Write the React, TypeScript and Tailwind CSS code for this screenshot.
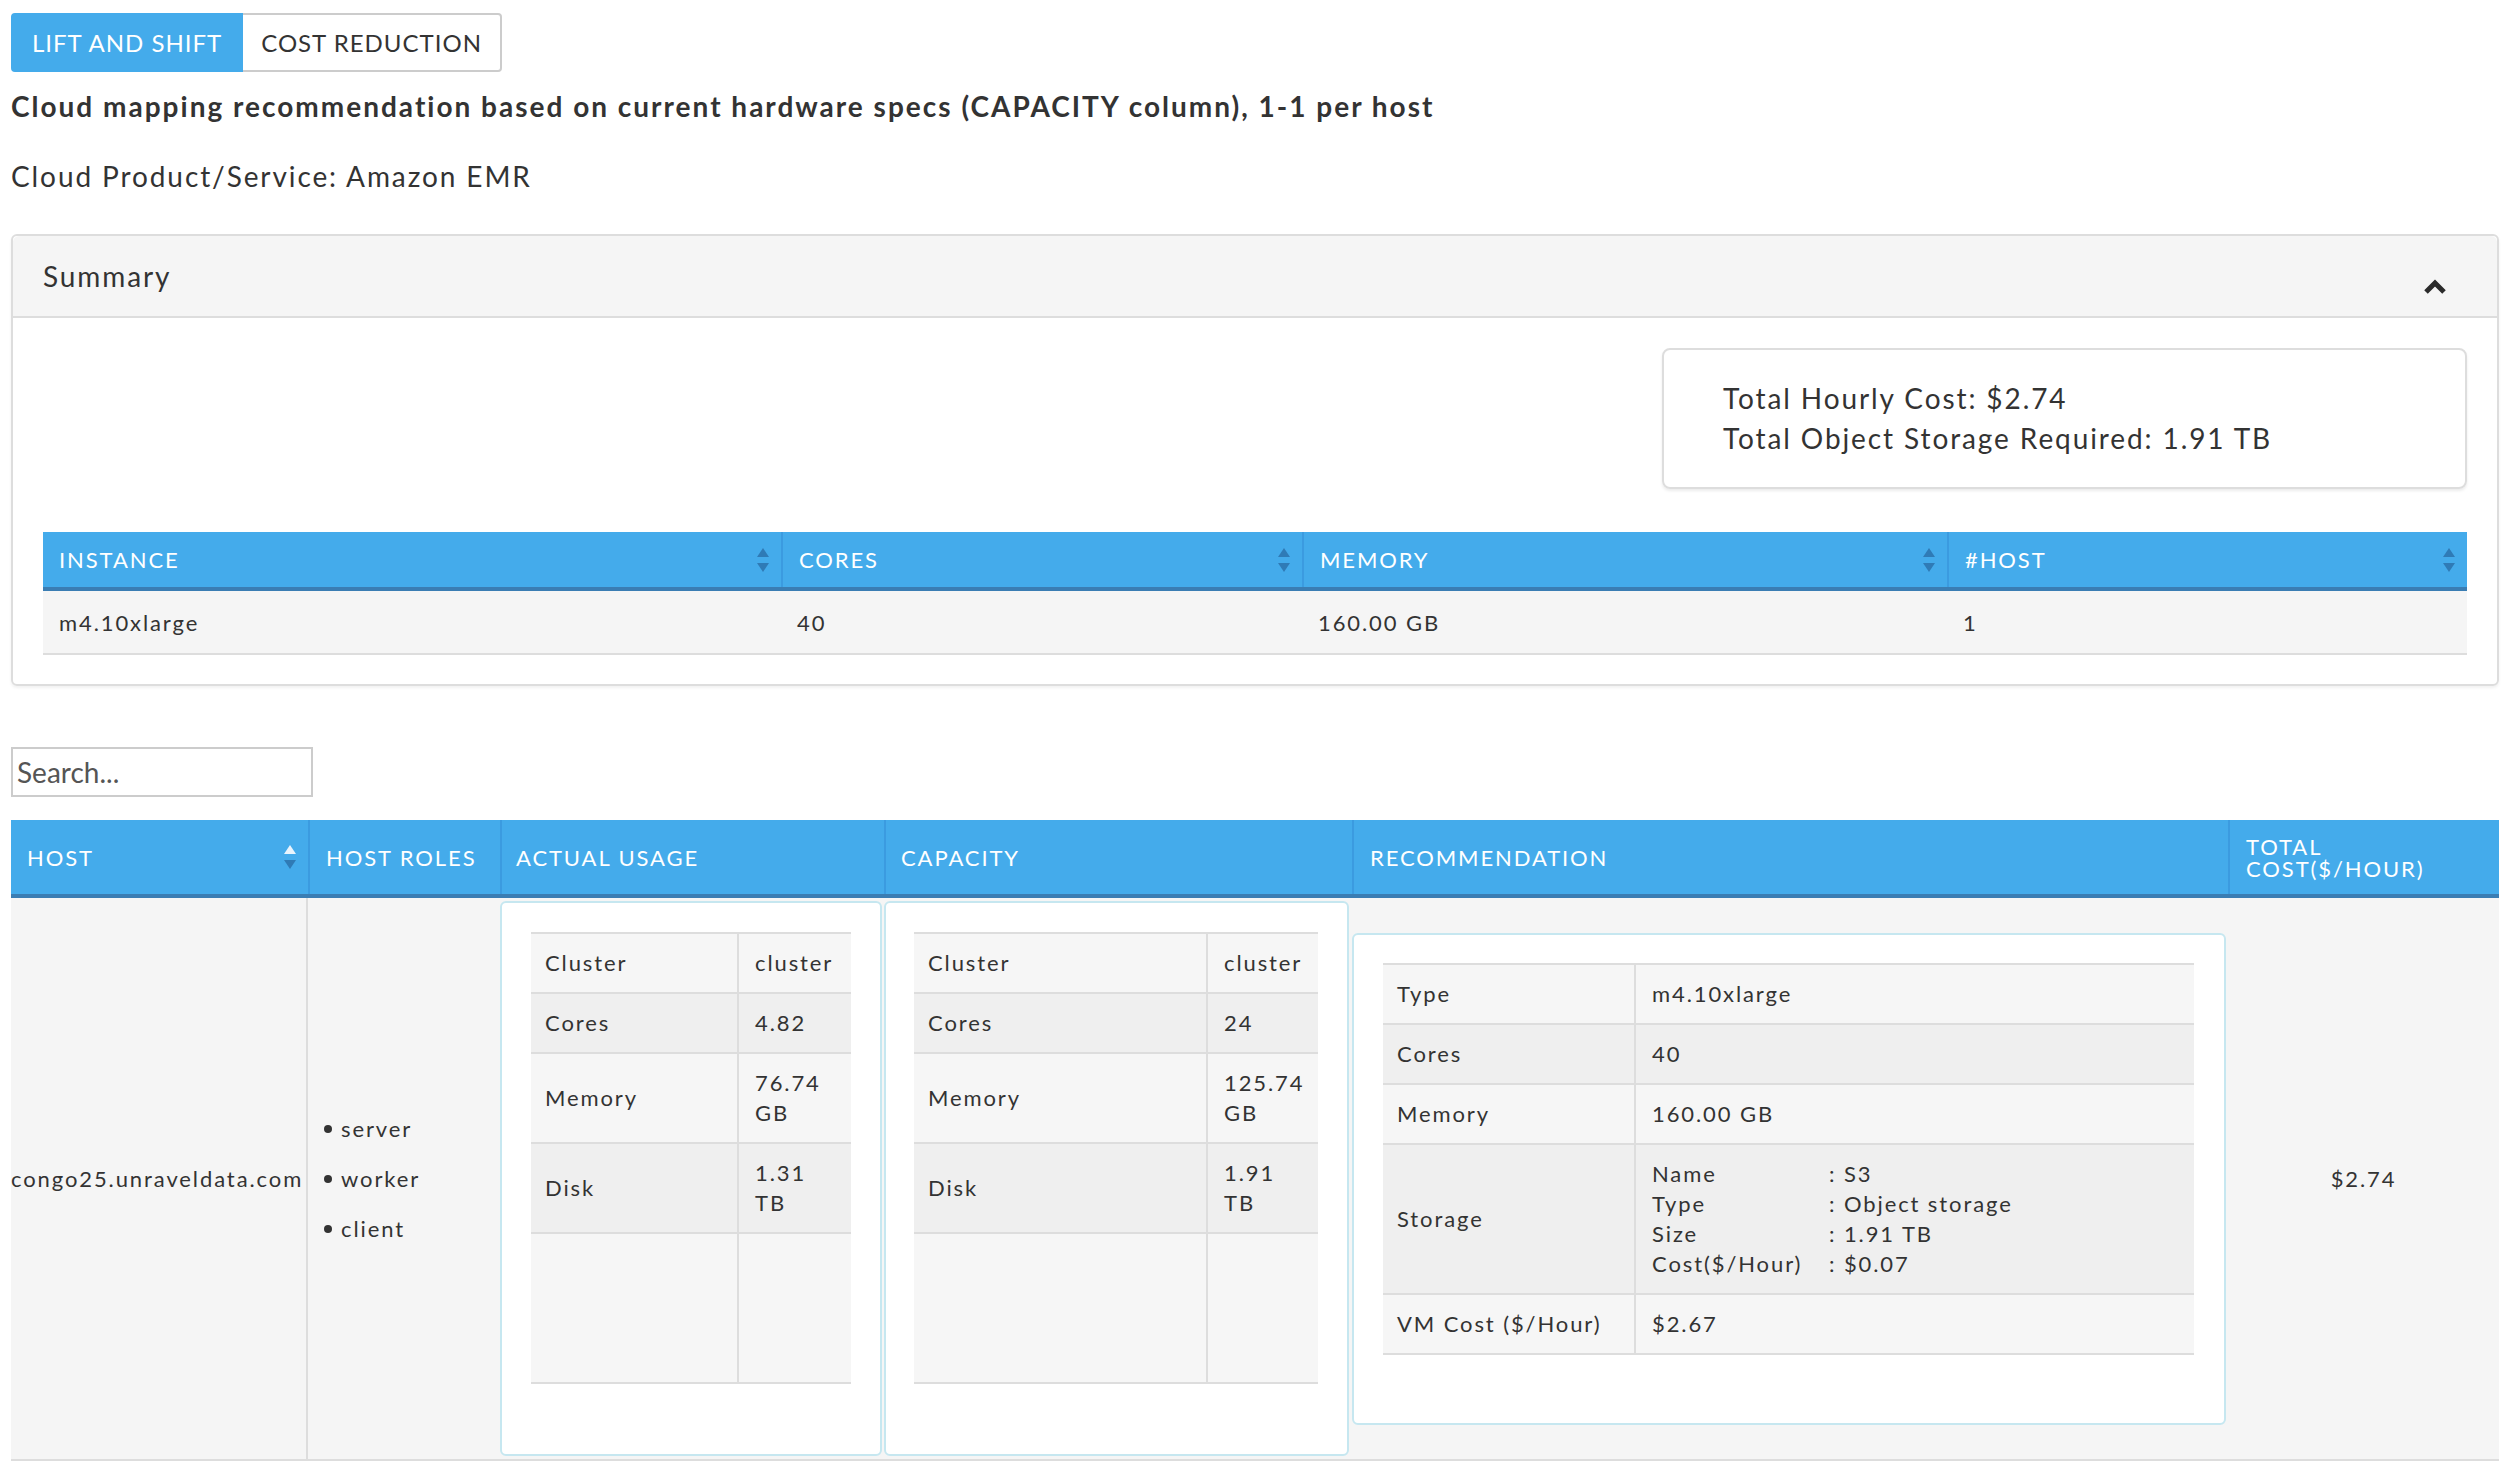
import type { ReactNode } from 'react';

type Row = [string, ReactNode];

const usageRows: Row[] = [
  ['Cluster', 'cluster'],
  ['Cores', '4.82'],
  ['Memory', '76.74 GB'],
  ['Disk', '1.31 TB'],
];

const capacityRows: Row[] = [
  ['Cluster', 'cluster'],
  ['Cores', '24'],
  ['Memory', '125.74 GB'],
  ['Disk', '1.91 TB'],
];

const storageLines = [
  ['Name', ': S3'],
  ['Type', ': Object storage'],
  ['Size', ': 1.91 TB'],
  ['Cost($/Hour)', ': $0.07'],
];

function SortIcon({ active }: { active?: boolean }) {
  return (
    <svg width="12" height="24" viewBox="0 0 12 24" className="shrink-0">
      <path d="M6 0L12 9H0Z" fill={active ? '#e8f4fd' : '#2f7bb6'} />
      <path d="M0 15H12L6 24Z" fill="#2f7bb6" />
    </svg>
  );
}

function ChevronUp() {
  return (
    <svg width="24" height="16" viewBox="0 0 24 16">
      <polyline points="3,14 12,5 21,14" fill="none" stroke="#2b2b2b" strokeWidth="5" strokeLinejoin="miter" />
    </svg>
  );
}

function KVTable({ rows, cols, withEmpty }: { rows: Row[]; cols: string; withEmpty?: boolean }) {
  return (
    <div className="border-t-2 border-[#dddddd] leading-[30px]">
      {rows.map(([k, v], i) => (
        <div
          key={k}
          className={`grid ${cols} border-b-2 border-[#dddddd] ${i % 2 === 0 ? 'bg-[#f6f6f6]' : 'bg-[#efefef]'}`}
        >
          <div className="flex items-center border-r-2 border-[#dddddd] pl-[14px] py-[14px]">{k}</div>
          <div className="pl-[16px] pr-[12px] py-[14px]">{v}</div>
        </div>
      ))}
      {withEmpty ? (
        <div className={`grid ${cols} h-[150px] border-b-2 border-[#dddddd] bg-[#f6f6f6]`}>
          <div className="border-r-2 border-[#dddddd]" />
          <div />
        </div>
      ) : null}
    </div>
  );
}

export default function App() {
  return (
    <div className="min-h-screen bg-white pl-[11px] pr-[16px] pt-[13px] pb-[20px] font-[Lato,sans-serif] text-[#333333]">
      {/* tabs */}
      <div className="flex h-[59px] text-[24px] tracking-[1px]">
        <button className="flex items-center rounded-l-[4px] border-2 border-[#44abeb] bg-[#44abeb] px-[19px] text-white">
          LIFT AND SHIFT
        </button>
        <button className="flex items-center rounded-r-[4px] border-2 border-l-0 border-[#cccccc] bg-white px-[18px] text-[#333333]">
          COST REDUCTION
        </button>
      </div>

      <h3 className="mt-[14px] text-[28px] leading-[40px] font-bold tracking-[2px]">
        Cloud mapping recommendation based on current hardware specs (CAPACITY column), 1-1 per host
      </h3>
      <p className="mt-[30px] text-[28px] leading-[40px] tracking-[1.9px]">Cloud Product/Service: Amazon EMR</p>

      {/* summary panel */}
      <div className="mt-[38px] rounded-[6px] border-2 border-[#dddddd] shadow-[0_2px_3px_rgba(0,0,0,0.06)]">
        <div className="flex h-[82px] items-center justify-between rounded-t-[6px] border-b-2 border-[#dddddd] bg-[#f5f5f5] pl-[30px] pr-[50px]">
          <span className="text-[28px] tracking-[1.9px]">Summary</span>
          <span className="mt-[20px]">
            <ChevronUp />
          </span>
        </div>
        <div className="px-[30px] pt-[30px] pb-[29px]">
          <div className="ml-auto w-[805px] rounded-[8px] border-2 border-[#dddddd] pl-[59px] pt-[28px] pb-[29px] text-[28px] leading-[40px] tracking-[1.9px] shadow-[0_2px_3px_rgba(0,0,0,0.08)]">
            <div>Total Hourly Cost: $2.74</div>
            <div>Total Object Storage Required: 1.91 TB</div>
          </div>

          <div className="mt-[43px] text-[22px] tracking-[1.9px]">
            <div className="grid h-[59px] grid-cols-[738px_521px_645px_520px] border-b-4 border-[#3a7db3] bg-[#44abeb] text-white">
              {['INSTANCE', 'CORES', 'MEMORY', '#HOST'].map((h, i) => (
                <div
                  key={h}
                  className={`flex items-center justify-between pl-[16px] pr-[12px] ${i > 0 ? 'border-l-2 border-[#3b9be0]' : ''}`}
                >
                  <span>{h}</span>
                  <SortIcon />
                </div>
              ))}
            </div>
            <div className="grid h-[64px] grid-cols-[738px_521px_645px_520px] items-center border-b-2 border-[#dddddd] bg-[#f5f5f5]">
              <div className="pl-[16px]">m4.10xlarge</div>
              <div className="pl-[16px]">40</div>
              <div className="pl-[16px]">160.00 GB</div>
              <div className="pl-[16px]">1</div>
            </div>
          </div>
        </div>
      </div>

      {/* search */}
      <input
        type="text"
        placeholder="Search..."
        className="mt-[61px] block h-[50px] w-[302px] border-2 border-[#cccccc] pl-[4px] text-[28px] text-[#333333] placeholder:text-[#555555] outline-none"
      />

      {/* hosts table */}
      <div className="mt-[23px] text-[22px] leading-[31px] tracking-[1.9px]">
        <div className="grid h-[78px] grid-cols-[297px_192px_384px_468px_876px_271px] border-b-4 border-[#3a7db3] bg-[#44abeb] text-white">
          <div className="flex items-center justify-between pl-[16px] pr-[12px]">
            <span>HOST</span>
            <SortIcon active />
          </div>
          <div className="flex items-center border-l-2 border-[#3b9be0] pl-[16px]">HOST ROLES</div>
          <div className="flex items-center border-l-2 border-[#3b9be0] pl-[14px]">ACTUAL USAGE</div>
          <div className="flex items-center border-l-2 border-[#3b9be0] pl-[15px]">CAPACITY</div>
          <div className="flex items-center border-l-2 border-[#3b9be0] pl-[16px]">RECOMMENDATION</div>
          <div className="flex items-center border-l-2 border-[#3b9be0] pl-[16px] leading-[22px]">
            <span className="mt-[2px]">
              TOTAL
              <br />
              COST($/HOUR)
            </span>
          </div>
        </div>

        <div className="grid grid-cols-[297px_192px_384px_468px_876px_271px] items-center border-b-2 border-[#dddddd] bg-[#f5f5f5]">
          <div className="flex items-center self-stretch border-r-2 border-[#dddddd]">congo25.unraveldata.com</div>

          <ul className="flex flex-col gap-[19px] pl-[16px]">
            {['server', 'worker', 'client'].map((r) => (
              <li key={r} className="flex items-center">
                <span className="mr-[9px] h-[8px] w-[8px] rounded-full bg-[#333333]" />
                {r}
              </li>
            ))}
          </ul>

          <div className="py-[3px]">
            <div className="w-[382px] rounded-[6px] border-2 border-[#c6e7f0] bg-white px-[29px] pt-[29px] pb-[70px]">
              <KVTable rows={usageRows} cols="grid-cols-[208px_1fr]" withEmpty />
            </div>
          </div>

          <div className="py-[3px]">
            <div className="w-[465px] rounded-[6px] border-2 border-[#c6e7f0] bg-white pl-[28px] pr-[29px] pt-[29px] pb-[70px]">
              <KVTable rows={capacityRows} cols="grid-cols-[294px_1fr]" withEmpty />
            </div>
          </div>

          <div>
            <div className="w-[874px] rounded-[6px] border-2 border-[#c6e7f0] bg-white pl-[29px] pr-[30px] pt-[28px] pb-[68px]">
              <KVTable
                cols="grid-cols-[253px_1fr]"
                rows={[
                  ['Type', 'm4.10xlarge'],
                  ['Cores', '40'],
                  ['Memory', '160.00 GB'],
                  [
                    'Storage',
                    <div className="grid grid-cols-[177px_auto] leading-[30px]">
                      {storageLines.map(([a, b]) => (
                        <div key={a} className="contents">
                          <span>{a}</span>
                          <span>{b}</span>
                        </div>
                      ))}
                    </div>,
                  ],
                  ['VM Cost ($/Hour)', '$2.67'],
                ]}
              />
            </div>
          </div>

          <div className="text-center">$2.74</div>
        </div>
      </div>
    </div>
  );
}
